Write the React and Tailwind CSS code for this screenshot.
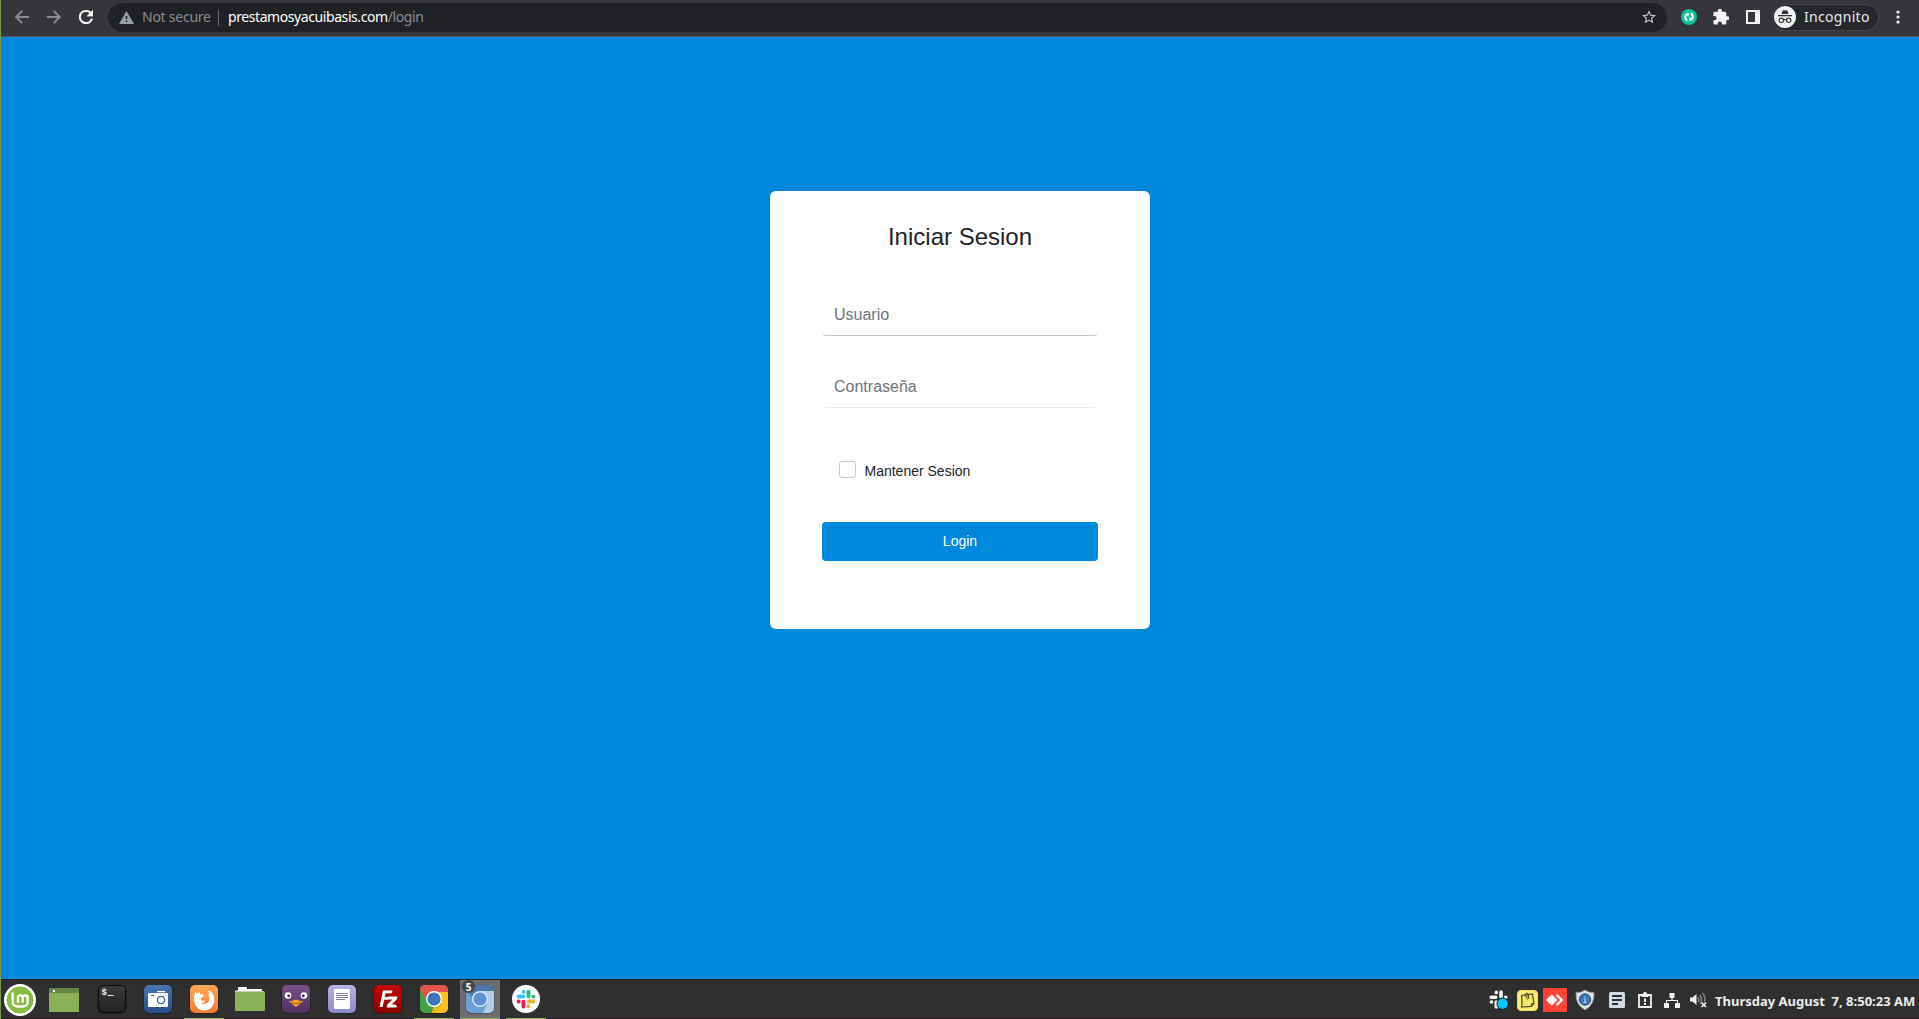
import React from "react";

const ui = "font-['Noto_Sans',sans-serif]";

function Slot({ width, active, running, children }) {
  return (
    <div
      className={
        "relative flex h-[39px] shrink-0 items-center justify-center border-b border-transparent " +
        width + " " + (active ? "bg-[#6e6e6e] " : "")
      }
    >
      {children}
      {running && <div className="absolute inset-x-0 -bottom-px h-px bg-[#8fb45f]" />}
    </div>
  );
}

function Tile({ id, from, to, children }) {
  return (
    <svg width="30" height="30" viewBox="0 0 30 30">
      <defs>
        <linearGradient id={id} x1="0" y1="0" x2="0" y2="1">
          <stop offset="0" stopColor={from} />
          <stop offset="1" stopColor={to} />
        </linearGradient>
        <clipPath id={id + "-clip"}>
          <rect x="1" y="1" width="28" height="28" rx="5" />
        </clipPath>
      </defs>
      <rect x=".5" y=".8" width="29" height="29" rx="5.5" fill="#000" opacity=".35" />
      <rect x="1" y="1" width="28" height="28" rx="5" fill={`url(#${id})`} />
      <g clipPath={`url(#${id}-clip)`}>{children}</g>
    </svg>
  );
}

function Mint() {
  return (
    <svg className="mt-[2px]" width="32" height="32" viewBox="0 0 32 32">
      <circle cx="16" cy="16" r="16" fill="#fff" />
      <circle cx="16" cy="16" r="13.4" fill="#86be43" />
      <path d="M8.600 8.500v9.200a4.800 4.800 0 0 0 4.800 4.800h5.400a4.800 4.800 0 0 0 4.800-4.800v-3.900a2.400 2.400 0 0 0-4.800 0v4.700M18.800 13.800a2.400 2.400 0 0 0-4.800 0v4.700" fill="none" stroke="#fff" strokeWidth="2.400" />
    </svg>
  );
}

function Desktop() {
  return (
    <svg className="mt-[2px]" width="30" height="24" viewBox="0 0 30 24">
      <rect width="30" height="24" fill="#8bb158" />
      <rect width="30" height="5" fill="#678544" />
      <rect x="4" y="2" width="2" height="2" fill="#fff" />
    </svg>
  );
}

function Folder() {
  return (
    <svg width="30" height="24" viewBox="0 0 30 24">
      <path d="M0 6V4.500q0-1 1-1h2V1q0-1 1-1h7q1 0 1 1v1h14q1 0 1 1v1h1q1 0 1 1v2H0z" fill="#fff" />
      <rect y="4.500" width="30" height="19.500" rx="1" fill="#8bb158" />
    </svg>
  );
}

function Terminal() {
  return (
    <Tile id="term" from="#3b3b3b" to="#222">
      <rect x="1" y="1" width="28" height="28" rx="5" fill="none" stroke="#0c0c0c" strokeWidth="2" />
      <text x="4.500" y="11" fontSize="9" fontWeight="700" fill="#eee" fontFamily="Liberation Mono, monospace">$</text>
      <path d="M10.500 11.500h6" stroke="#eee" strokeWidth="1" />
    </Tile>
  );
}

function Camera() {
  return (
    <Tile id="cam" from="#4a74b0" to="#274d8b">
      <rect x="14" y="7" width="8" height="1.200" fill="#fff" />
      <rect x="5" y="9" width="20" height="14" rx="1" fill="#fff" />
      <rect x="8" y="11" width="3" height="1.200" fill="#31599a" />
      <circle cx="18" cy="16" r="3.600" fill="none" stroke="#31599a" strokeWidth="1.300" />
    </Tile>
  );
}

function Firefox() {
  return (
    <Tile id="fox" from="#ffa657" to="#f27b35">
      <path d="M6.500 7.500l1 2L11 8l.3 2.300c1.500-.2 3.500.2 3.700 1.200-.3 1.500-2.800 1.700-3.200 3.200-.2 1.800 1.700 2.600 4.500 1.800-.8 2-2.500 2.600-4.500 2.400 2.500 1.600 7.200 1 8.200-1.900.8-3 .3-5.500-1.300-7.300l1.700.5c0-1.500-.8-2.800-1.700-3.700C22 7 25 10 25.200 14.500A10 10 0 0 1 5.500 18.500C4.600 15 5 10.500 6.500 7.500z" fill="#fff" />
    </Tile>
  );
}

function Pidgin() {
  return (
    <Tile id="pidgin" from="#78508a" to="#50305f">
      <circle cx="7" cy="11.500" r="3.300" fill="#fff" />
      <circle cx="23" cy="11.500" r="3.300" fill="#fff" />
      <circle cx="7.800" cy="11.800" r="1.500" fill="#4b3450" />
      <circle cx="22.200" cy="11.800" r="1.500" fill="#4b3450" />
      <path d="M7.500 17.500l4-.8 2.300-1.200 1.200.6 1.200-.6 2.300 1.200 4 .8-3.500 2-1.500 1.700L15 23l-2.500-1.800-1.500-1.700z" fill="#f5a13a" />
      <path d="M7.500 17.500l7.500 1.500 7.500-1.500-4 2.300-3.500.7-3.500-.7z" fill="#c76c18" />
    </Tile>
  );
}

function Document() {
  return (
    <Tile id="doc" from="#b5b2e3" to="#8c88cc">
      <rect x="7" y="5" width="16" height="20" rx="1" fill="#fff" />
      <path d="M9 9.500h12M9 11.500h12M9 13.500h12M9 15.500h9" stroke="#7b78a8" strokeWidth="1" />
    </Tile>
  );
}

function Filezilla() {
  return (
    <Tile id="fz" from="#c40606" to="#8f0000">
      <path d="M6.500 23L10 6.500h9.500l-.6 2.800h-6.300l-.8 3.700h4l-.6 2.700h-4L9.600 23z" fill="#fff" />
      <path d="M15 12.500h9.500l-.6 2.700-5.400 5.200h4.200q.8 1.600 1.800 2.400-1 .7-2.300.7h-8.500l.6-2.900 5.200-5.200h-5z" fill="#fff" />
    </Tile>
  );
}

function Chrome() {
  return (
    <Tile id="chrome" from="#ee6a5c" to="#d83d30">
      <path d="M0 4l8 13 8 4-2 9H0z" fill="#43a047" />
      <path d="M15 7h15v24H16l6-11z" fill="#fbc31c" />
      <path d="M0 0h30v8H15l-6 9L0 4z" fill="#e2574c" />
      <path d="M15 22l7-2-5 10h-5z" fill="#eab61c" />
      <circle cx="15" cy="15" r="8" fill="#fff" />
      <circle cx="15" cy="15" r="6.600" fill="#3c79b8" />
    </Tile>
  );
}

function Chromium() {
  return (
    <Tile id="chromium" from="#6e9bd0" to="#6d9fd6">
      <path d="M15 7h15v24H17l5-11z" fill="#b2cdea" />
      <path d="M0 0h30v7H15l-6 9L0 3z" fill="#4d76a8" />
      <circle cx="15" cy="15" r="8" fill="#dce9f7" />
      <circle cx="15" cy="15" r="6.600" fill="#5f90cf" />
    </Tile>
  );
}

function Slack() {
  return (
    <svg width="28" height="28" viewBox="0 0 28 28">
      <circle cx="14" cy="14" r="14" fill="#fff" />
      <g strokeLinecap="round" strokeWidth="3.900" fill="none">
        <path d="M6.500 11.500h4.800M11.600 6.700v.2" stroke="#36c5f0" />
        <path d="M16.500 6.600v4.800M21.300 11.600h.2" stroke="#2eb67d" />
        <path d="M16.700 16.500h4.800M16.500 21.300v.2" stroke="#ecb22e" />
        <path d="M11.500 16.700v4.800M6.600 16.500h.2" stroke="#e01e5a" />
      </g>
    </svg>
  );
}

function BrowserBar() {
  return (
    <header className={`flex h-[37px] shrink-0 items-start border-b border-[#56575a] bg-[#35363a] ${ui}`}>
      <div className="flex h-[34px] w-[107px] shrink-0 items-center">
        <svg className="ml-[14px]" width="14" height="14" viewBox="0 0 14 14" fill="none" stroke="#8b8c8f" strokeWidth="1.900">
          <path d="M14 7H1.500M7.300.800L1.200 7l6.100 6.200" />
        </svg>
        <svg className="ml-[18px]" width="14" height="14" viewBox="0 0 14 14" fill="none" stroke="#8b8c8f" strokeWidth="1.900">
          <path d="M0 7h12.500M6.700.800L12.800 7l-6.100 6.200" />
        </svg>
        <svg className="ml-[18px]" width="14" height="14" viewBox="4 4 16 16" fill="#fff" stroke="#fff" strokeWidth=".4">
          <path d="M17.650 6.350A7.960 7.960 0 0 0 12 4a8 8 0 1 0 7.730 10h-2.080A6 6 0 1 1 12 6c1.660 0 3.140.690 4.220 1.780L13 11h7V4z" />
        </svg>
      </div>
      <div className="mt-[3px] flex h-[29px] w-[1559px] shrink-0 items-center rounded-full bg-[#202124] pl-[11px] pr-[11px] text-[14px] leading-[29px]">
        <svg className="-mt-px" width="15" height="13" viewBox="0 0 15 13">
          <path d="M7.500 0L15 13H0z" fill="#9aa0a6" />
          <path d="M6.700 5h1.600v3H6.700zM6.700 9.500h1.600V11H6.700z" fill="#202124" />
        </svg>
        <span className="-mt-[2px] ml-[8px] w-[76px] shrink-0 whitespace-nowrap tracking-[-0.25px] text-[#8a8e93]">Not secure</span>
        <span className="h-4 w-px bg-[#6b6d70]" />
        <span className="-mt-[2px] ml-[9px] whitespace-nowrap tracking-[-0.42px] text-white">
          prestamosyacuibasis.com<span className="text-[#8a8e93]">/login</span>
        </span>
        <svg className="-mt-[2px] ml-auto" width="14" height="14" viewBox="2 2 20 20" fill="#c5c7ca">
          <path d="M22 9.240l-7.190-.620L12 2 9.190 8.630 2 9.240l5.460 4.730L5.820 21 12 17.270 18.180 21l-1.630-7.030zM12 15.400l-3.760 2.270 1-4.280-3.320-2.880 4.380-.380L12 6.100l1.710 4.040 4.380.380-3.320 2.880 1 4.280z" />
        </svg>
      </div>
      <div className="flex h-[34px] grow items-center">
        <svg className="ml-[14px]" width="16" height="16" viewBox="0 0 16 16">
          <circle cx="8" cy="8" r="8" fill="#09c199" />
          <path d="M6.200 11.500A3.600 3.600 0 0 1 5 6M9.800 4.500A3.600 3.600 0 0 1 11 10" fill="none" stroke="#fff" strokeWidth="2" />
          <path d="M3.700 5L8 3.800 7.500 8zM12.300 11L8 12.200 8.500 8z" fill="#fff" />
        </svg>
        <svg className="ml-[16px]" width="16" height="16" viewBox="1.500 1.500 21 21" fill="#f1f3f4">
          <path d="M20.500 11H19V7a2 2 0 0 0-2-2h-4V3.500a2.500 2.500 0 0 0-5 0V5H4a2 2 0 0 0-2 2v3.800h1.500a2.700 2.700 0 0 1 0 5.400H2V20a2 2 0 0 0 2 2h3.800v-1.500a2.700 2.700 0 0 1 5.400 0V22H17a2 2 0 0 0 2-2v-4h1.500a2.500 2.500 0 0 0 0-5z" />
        </svg>
        <svg className="ml-[17px]" width="14" height="14" viewBox="0 0 14 14">
          <path fillRule="evenodd" d="M0 0h14v14H0zM2 2v10h7V2z" fill="#f1f3f4" />
        </svg>
        <div className="ml-[12px] flex h-[27px] w-[107px] items-center rounded-full border border-[#45464a] bg-[#26272b] pl-px">
          <svg width="22" height="22" viewBox="0 0 22 22">
            <circle cx="11" cy="11" r="11" fill="#f1f3f4" />
            <path d="M7.500 8l1-3.300q.2-.7 1-.5l1.500.4 1.500-.4q.8-.2 1 .5l1 3.300zM4 9h14v1.200H4z" fill="#303135" />
            <g fill="none" stroke="#303135" strokeWidth="1.100">
              <circle cx="7.300" cy="14.300" r="2.200" />
              <circle cx="14.700" cy="14.300" r="2.200" />
              <path d="M9.500 14q1.500-1 3 0" />
            </g>
          </svg>
          <span className="-mt-[2px] ml-[8px] whitespace-nowrap text-[14px] tracking-[0.3px] text-[#e8eaed]">Incognito</span>
        </div>
        <svg className="ml-[17px]" width="4" height="14" viewBox="0 0 4 14" fill="#f1f3f4">
          <circle cx="2" cy="2" r="1.600" />
          <circle cx="2" cy="7" r="1.600" />
          <circle cx="2" cy="12" r="1.600" />
        </svg>
      </div>
    </header>
  );
}

function LoginCard() {
  return (
    <form className="mt-[154px] flex h-[438px] w-[380px] flex-col rounded-md bg-white px-[52px]">
      <h1 className="mt-[31px] text-center text-2xl leading-[29px] text-[#212529]">Iniciar Sesion</h1>
      <input
        className="mt-[44px] h-[41px] w-full rounded border-b border-[#c4c4c4] px-3 text-base placeholder:text-[#6c757d] placeholder:opacity-100 focus:outline-none"
        placeholder="Usuario"
      />
      <input
        type="password"
        className="mt-[31px] h-[41px] w-full rounded border-b border-[#ebebeb] px-3 text-base placeholder:text-[#6c757d] placeholder:opacity-100 focus:outline-none"
        placeholder="Contraseña"
      />
      <label className="mt-[53px] flex h-[17px] items-center pl-[17px] text-sm text-[#212529]">
        <span className="h-[17px] w-[17px] rounded-[3px] border border-[#c8c8c8] bg-white" />
        <span className="ml-[8.500px] pt-[3px]">Mantener Sesion</span>
      </label>
      <button type="button" className="mt-[44px] h-[39px] w-full rounded bg-[#0088dd] pb-[2px] text-sm text-white">
        Login
      </button>
    </form>
  );
}

function Tray() {
  return (
    <div className="ml-auto flex h-[39px] items-center pt-px">
      <svg width="20" height="20" viewBox="0 0 20 20">
        <g stroke="#f2f2f2" strokeLinecap="round" strokeWidth="3.600" fill="none">
          <path d="M2.200 7.300h4.500M7.300 2.200v.4M12 2v4.800M16.500 7.300h.3M2.400 12h.2M7.300 12v5M12 12h4" />
        </g>
        <circle cx="13.700" cy="13.700" r="5.700" fill="#08c6f5" stroke="#181818" strokeWidth="1" />
      </svg>
      <svg className="ml-[8px]" width="21" height="21" viewBox="0 0 21 21">
        <rect x=".5" y=".5" width="20" height="20" rx="3.500" fill="#f9ed7a" stroke="#f0e268" />
        <path d="M4.500 5.500L15.500 4l1.500 9.500-2.700 2.800-9.800.7q1-5.500 0-11.500z" fill="#f3e56c" stroke="#4f4b24" strokeWidth="1.200" />
        <path d="M8.300 7V4q1.500-2 3.200 0v4.500q-.8 1.300-1.600 0V5.500M14.300 16.300l.2-2.600 2.500-.2" fill="none" stroke="#4f4b24" strokeWidth="1" />
      </svg>
      <svg className="ml-[5px]" width="24" height="24" viewBox="0 0 24 24">
        <rect width="24" height="24" fill="#ff4236" />
        <path d="M3 12l5.700-5.700L14.400 12l-5.700 5.700zM12.800 7.700l1.600-1.600 6 5.900-6 5.900-1.600-1.600 4.300-4.300z" fill="#fff" />
      </svg>
      <svg className="ml-[7px]" width="22" height="22" viewBox="0 0 22 22">
        <path d="M11 1q4 3 9 2.500 1 12-9 17.500Q1 15.500 2 3.500 7 4 11 1z" fill="#e4e4e4" stroke="#8e8e8e" strokeWidth=".8" />
        <circle cx="11" cy="10.500" r="5.700" fill="#3b75b5" stroke="#244d80" />
        <path d="M11 7.200v1.300M9.800 10H11v3.300M9.500 13.500h3" stroke="#c6dcf2" strokeWidth="1.100" fill="none" />
      </svg>
      <svg className="ml-[13px]" width="16" height="16" viewBox="0 0 16 16">
        <rect width="16" height="16" rx="1.500" fill="#d2dae3" />
        <path d="M3 4h10M3 8h10M3 12h6" stroke="#2f2f2f" strokeWidth="1.800" />
      </svg>
      <svg className="ml-[13px]" width="14" height="16" viewBox="0 0 14 16">
        <path d="M1 3h12v12H1z" fill="none" stroke="#f0f0f0" strokeWidth="1.800" />
        <path d="M3.500 2H5V1q2-1.800 4 0v1h1.500v3h-7zM6 6.500h2V10H6zM6 11h2v2H6z" fill="#f0f0f0" />
      </svg>
      <svg className="ml-[12px]" width="16" height="15" viewBox="0 0 16 15" fill="#f0f0f0">
        <path d="M5.500 0h5v5H8.600v2H14v3h2v5h-5v-5h2V8H3v2h2v5H0v-5h2V7h5.400V5H5.500z" />
      </svg>
      <svg className="ml-[10px]" width="17" height="16" viewBox="0 0 17 16">
        <path d="M0 5.500h2.500L6.500 2v11l-4-3.500H0z" fill="#f0f0f0" />
        <path d="M8 5q1.500 2.500 0 5M10 3q3 4.500 0 9M12.500 1q4 5 1.500 9" fill="none" stroke="#888" strokeWidth="1.400" />
        <path d="M11.500 10.500l4.500 4.500M16 10.500L11.500 15" stroke="#f0f0f0" strokeWidth="1.700" />
      </svg>
      <span className={`ml-[8px] w-[204px] whitespace-pre pt-[3px] text-[13px] font-bold text-[#ececec] ${ui}`}>Thursday August  7, 8:50:23 AM</span>
    </div>
  );
}

function Taskbar() {
  return (
    <footer className="flex h-10 shrink-0 items-start border-t border-[#232323] bg-[#2f2f2f] shadow-[inset_0_-1px_0_#252122]">
      <Slot width="w-[38px]"><Mint /></Slot>
      <Slot width="w-[50px]"><Desktop /></Slot>
      <Slot width="w-[46px]"><Terminal /></Slot>
      <Slot width="w-[46px]"><Camera /></Slot>
      <div className="ml-[3px] flex gap-[6px]">
        <Slot width="w-10" running><Firefox /></Slot>
        <Slot width="w-10"><Folder /></Slot>
        <Slot width="w-10"><Pidgin /></Slot>
        <Slot width="w-10"><Document /></Slot>
        <Slot width="w-10"><Filezilla /></Slot>
        <Slot width="w-10" running><Chrome /></Slot>
        <Slot width="w-10" running active>
          <Chromium />
          <span className={`absolute left-[2px] top-0 flex h-[13px] w-[13px] items-center justify-center rounded-full bg-[#444] text-[10px] font-bold leading-none text-white ${ui}`}>5</span>
        </Slot>
        <Slot width="w-10" running><Slack /></Slot>
      </div>
      <Tray />
    </footer>
  );
}

export default function App() {
  return (
    <div className="flex h-[1019px] w-[1919px] flex-col overflow-hidden border-l border-[#76994c] bg-[#0088dd] font-['Liberation_Sans',Arial,sans-serif]">
      <BrowserBar />
      <main className="flex grow items-start justify-center">
        <LoginCard />
      </main>
      <Taskbar />
    </div>
  );
}
